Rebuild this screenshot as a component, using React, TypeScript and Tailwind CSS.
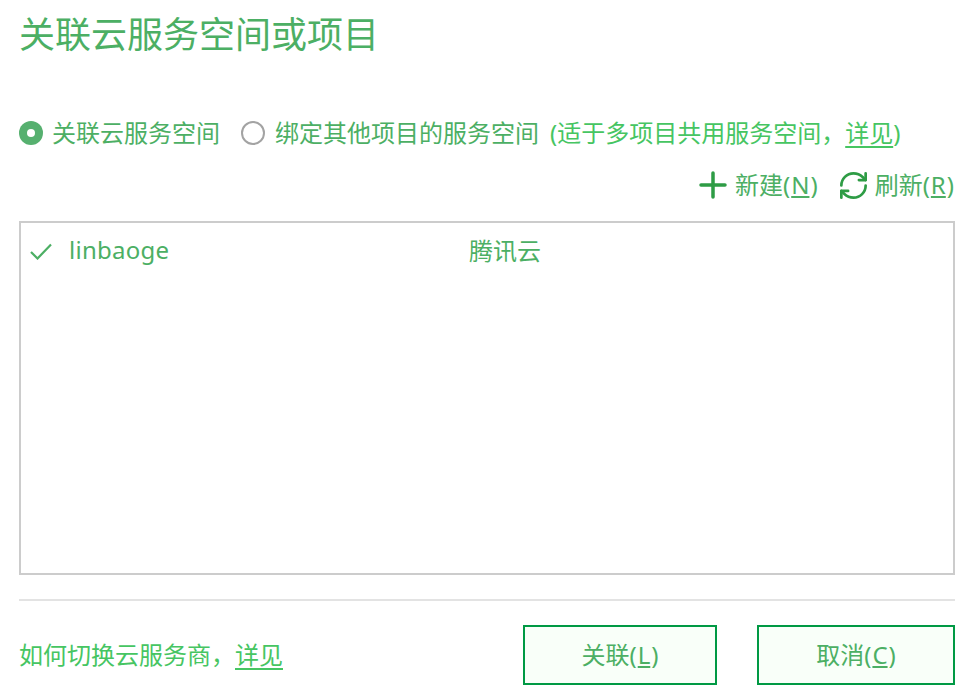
const font = "font-['Noto_Sans','Noto_Sans_CJK_SC',sans-serif]";

function Key({ children }: { children: string }) {
	return <span className="px-[1px] underline underline-offset-2">{children}</span>;
}

function PlusIcon() {
	return (
		<svg width="28" height="28" viewBox="0 0 28 28" fill="none" stroke="#2e9c45" strokeWidth="3.5" strokeLinecap="round">
			<path d="M2 14h24M14 2v24" />
		</svg>
	);
}

function RefreshIcon() {
	return (
		<svg width="27" height="27" viewBox="2 2 20 20" fill="none" stroke="#2e9c45" strokeWidth="2" strokeLinecap="round" strokeLinejoin="round">
			<path d="M3 12a9 9 0 0 1 9-9 9.75 9.75 0 0 1 6.74 2.74L21 8" />
			<path d="M21 3v5h-5" />
			<path d="M21 12a9 9 0 0 1-9 9 9.75 9.75 0 0 1-6.74-2.74L3 16" />
			<path d="M8 16H3v5" />
		</svg>
	);
}

function CheckIcon() {
	return (
		<svg width="22" height="17" viewBox="0 0 22 17" fill="none" stroke="#4caf64" strokeWidth="2.2" className="ml-[9px]">
			<path d="M1 9l6.5 6.5L21 1.5" />
		</svg>
	);
}

export default function App() {
	return (
		<div className={`${font} w-[961px] h-[692px] overflow-hidden bg-white pl-[19px] pr-[6px] text-[#4caf64]`}>
			<h1 className="h-[70px] text-[36px] leading-[70px] font-normal">关联云服务空间或项目</h1>

			<div className="mt-[43px] flex h-[40px] items-center text-[24px] leading-[40px]">
				<span className="flex h-6 w-6 items-center justify-center rounded-full bg-[#56b06f]">
					<span className="h-2 w-2 rounded-full bg-white" />
				</span>
				<span className="ml-[9px]">关联云服务空间</span>
				<span className="ml-[21px] h-6 w-6 rounded-full border-2 border-[#a3a3a3]" />
				<span className="ml-[10px]">绑定其他项目的服务空间</span>
				<span className="ml-[11px] text-[#46c562]">
					(适于多项目共用服务空间，<span className="underline underline-offset-4">详见</span>)
				</span>
			</div>

			<div className="mt-[12px] flex h-[40px] items-center justify-end pr-[1px] text-[24px]">
				<PlusIcon />
				<span className="ml-[8px]">
					新建(<Key>N</Key>)
				</span>
				<span className="ml-[22px]">
					<RefreshIcon />
				</span>
				<span className="ml-[8px]">
					刷新(<Key>R</Key>)
				</span>
			</div>

			<div className="mt-[16px] h-[354px] border-2 border-[#cccccc] pt-[8px]">
				<div className="flex h-[40px] items-center text-[24px]">
					<CheckIcon />
					<span className="ml-[17px] w-[400px] -translate-y-px tracking-[0.25px]">linbaoge</span>
					<span>腾讯云</span>
				</div>
			</div>

			<div className="mt-[24px] h-[2px] bg-[#e3e3e3]" />

			<div className="mt-[24px] flex h-[60px] items-center">
				<span className="text-[24px] text-[#46c562]">
					如何切换云服务商，<span className="underline underline-offset-4">详见</span>
				</span>
				<button className="ml-auto h-[60px] w-[194px] border-2 border-[#009944] bg-[#f9fff9] text-[24px]">
					关联(<Key>L</Key>)
				</button>
				<button className="ml-[40px] h-[60px] w-[198px] border-2 border-[#009944] bg-[#f9fff9] text-[24px]">
					取消(<Key>C</Key>)
				</button>
			</div>
		</div>
	);
}
